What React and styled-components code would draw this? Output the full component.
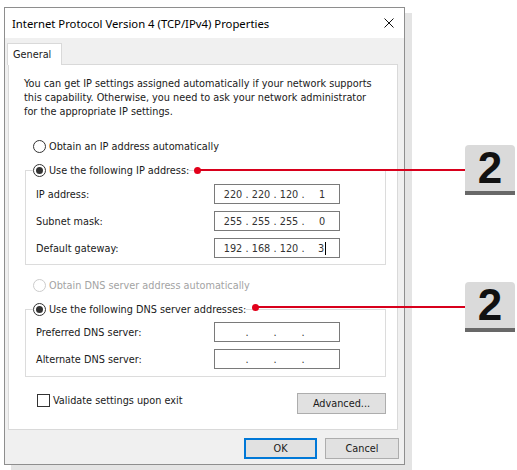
import React from "react";
import styled, { createGlobalStyle } from "styled-components";

const GlobalStyle = createGlobalStyle`
  html, body {
    margin: 0;
    padding: 0;
    background: #ffffff;
  }
`;

const Page = styled.div`
  position: relative;
  width: 517px;
  height: 470px;
  padding: 7px 0 0 4px;
  box-sizing: border-box;
  font-family: "DejaVu Sans Condensed", "Liberation Sans", sans-serif;
  font-size: 10.8px;
  color: #1a1a1a;
`;

const Dialog = styled.div`
  width: 401px;
  box-sizing: border-box;
  border: 1px solid #8e8e8e;
  background: #f0f0f0;
  box-shadow: 7px 6px 0 #e4e4e4;
`;

const TitleBar = styled.div`
  height: 30px;
  background: #ffffff;
  display: flex;
  align-items: center;
  justify-content: space-between;
  padding: 0 10px 0 7px;
  font-family: "Noto Sans", "Open Sans", sans-serif;
  font-size: 11.3px;
  color: #000;
`;

const CloseIcon = () => (
  <svg width="10" height="10" viewBox="0 0 10 10">
    <path d="M0.5 0.5 L9.5 9.5 M9.5 0.5 L0.5 9.5" stroke="#111" strokeWidth="1" />
  </svg>
);

const Body = styled.div`
  padding: 5px 0 0 2px;
`;

const Tab = styled.div`
  display: inline-flex;
  align-items: center;
  height: 22px;
  width: 55px;
  box-sizing: border-box;
  padding-left: 5px;
  background: #ffffff;
  border: 1px solid #d9d9d9;
  border-bottom: none;
  position: relative;
  z-index: 1;
  margin-bottom: -1px;
`;

const Panel = styled.div`
  margin-left: 1px;
  width: 390px;
  height: 366px;
  box-sizing: border-box;
  background: #ffffff;
  border: 1px solid #d9d9d9;
  padding: 12px 11px 0 15px;
`;

const Intro = styled.p`
  margin: 0;
  line-height: 14px;
`;

const OptionRow = styled.div`
  display: flex;
  align-items: center;
  gap: 3px;
  height: 16px;
  margin: ${({ $mt }) => $mt || 0}px 0 0 ${({ $ml }) => ($ml === undefined ? 9 : $ml)}px;
  color: ${({ $disabled }) => ($disabled ? "#a3a3a3" : "inherit")};
`;

const RadioCircle = styled.span`
  width: 13px;
  height: 13px;
  box-sizing: border-box;
  border-radius: 50%;
  border: 1px solid ${({ $disabled }) => ($disabled ? "#cccccc" : "#333333")};
  background: #ffffff;
  display: flex;
  align-items: center;
  justify-content: center;
  &::after {
    content: "";
    width: 7px;
    height: 7px;
    border-radius: 50%;
    background: #333333;
    display: ${({ $checked }) => ($checked ? "block" : "none")};
  }
`;

const Radio = ({ checked, disabled, label, mt, ml }) => (
  <OptionRow $mt={mt} $ml={ml} $disabled={disabled}>
    <RadioCircle $checked={checked} $disabled={disabled} />
    <span>{label}</span>
  </OptionRow>
);

const Group = styled.fieldset`
  margin: ${({ $mt }) => $mt}px 0 0 1px;
  width: 361px;
  box-sizing: border-box;
  border: 1px solid #dcdcdc;
  padding: 0 0 ${({ $pb }) => $pb}px 7px;
  min-width: 0;
`;

const Legend = styled.legend`
  padding: 0;
  & > div {
    margin: 0;
  }
`;

const FieldList = styled.div`
  display: flex;
  flex-direction: column;
  gap: 7px;
  margin-top: ${({ $mt }) => $mt}px;
  padding-left: 3px;
`;

const FieldRow = styled.div`
  display: flex;
  align-items: center;
`;

const FieldLabel = styled.span`
  width: 178px;
`;

const IpBox = styled.div`
  width: 126px;
  height: 20px;
  box-sizing: border-box;
  border: 1px solid #7a7a7a;
  display: flex;
  align-items: center;
  padding-left: 7px;
  color: #333;
`;

const Octet = styled.span`
  width: ${({ $last }) => ($last ? 32 : 22)}px;
  text-align: center;
  display: inline-flex;
  justify-content: center;
  align-items: center;
`;

const Dot = styled.span`
  width: 6px;
  text-align: center;
`;

const Caret = styled.span`
  width: 1px;
  height: 13px;
  background: #000;
  margin-left: 1px;
`;

const IpField = ({ value = ["", "", "", ""], caret }) => (
  <IpBox>
    {value.map((o, i) => (
      <React.Fragment key={i}>
        <Octet $last={i === 3}>
          {o}
          {caret && i === 3 && <Caret />}
        </Octet>
        {i < 3 && <Dot>.</Dot>}
      </React.Fragment>
    ))}
  </IpBox>
);

const BottomRow = styled.div`
  display: flex;
  justify-content: space-between;
  align-items: flex-start;
  margin-top: 16px;
`;

const CheckRow = styled.div`
  display: flex;
  align-items: center;
  gap: 3px;
  margin: 1px 0 0 13px;
`;

const CheckBox = styled.span`
  width: 13px;
  height: 13px;
  box-sizing: border-box;
  border: 1px solid #333;
  background: #fff;
`;

const Button = styled.button`
  width: ${({ $w }) => $w}px;
  height: 21px;
  box-sizing: border-box;
  background: #e1e1e1;
  border: 1px solid ${({ $primary }) => ($primary ? "#0078d7" : "#adadad")};
  box-shadow: ${({ $primary }) => ($primary ? "inset 0 0 0 1px #0078d7" : "none")};
  font-family: inherit;
  font-size: inherit;
  color: #1a1a1a;
  padding: 0;
`;

const Footer = styled.div`
  display: flex;
  justify-content: flex-end;
  gap: 8px;
  padding: 8px 5px 5px 0;
`;

const Callout = styled.div`
  position: absolute;
  left: ${({ $left }) => $left}px;
  top: ${({ $top }) => $top}px;
  right: 2px;
  height: 50px;
  display: flex;
  align-items: center;
`;

const RedDot = styled.span`
  width: 7px;
  height: 7px;
  border-radius: 50%;
  background: #e2001a;
  flex-shrink: 0;
`;

const RedLine = styled.span`
  flex: 1;
  height: 2px;
  background: #d8001c;
  margin-left: -1px;
`;

const Badge = styled.div`
  width: 50px;
  height: 50px;
  box-sizing: border-box;
  background: #dadada;
  border-radius: 4px 4px 0 0;
  border-bottom: 4px solid #686868;
  display: flex;
  align-items: center;
  justify-content: center;
  font-family: "Liberation Sans", Arial, sans-serif;
  font-weight: bold;
  font-size: 44px;
  color: #111;
  padding-bottom: 1px;
`;

export default function App() {
  return (
    <Page>
      <GlobalStyle />
      <Dialog>
        <TitleBar>
          <span>Internet Protocol Version 4 (TCP/IPv4) Properties</span>
          <CloseIcon />
        </TitleBar>
        <Body>
          <Tab>General</Tab>
          <Panel>
            <Intro>
              You can get IP settings assigned automatically if your network supports
              <br />
              this capability. Otherwise, you need to ask your network administrator
              <br />
              for the appropriate IP settings.
            </Intro>
            <Radio label="Obtain an IP address automatically" mt={19} />
            <Group $mt={8} $pb={6}>
              <Legend>
                <Radio checked label="Use the following IP address:" ml={0} />
              </Legend>
              <FieldList $mt={6}>
                <FieldRow>
                  <FieldLabel>IP address:</FieldLabel>
                  <IpField value={["220", "220", "120", "1"]} />
                </FieldRow>
                <FieldRow>
                  <FieldLabel>Subnet mask:</FieldLabel>
                  <IpField value={["255", "255", "255", "0"]} />
                </FieldRow>
                <FieldRow>
                  <FieldLabel>Default gateway:</FieldLabel>
                  <IpField value={["192", "168", "120", "3"]} caret />
                </FieldRow>
              </FieldList>
            </Group>
            <Radio disabled label="Obtain DNS server address automatically" mt={12} />
            <Group $mt={8} $pb={7}>
              <Legend>
                <Radio checked label="Use the following DNS server addresses:" ml={0} />
              </Legend>
              <FieldList $mt={5}>
                <FieldRow>
                  <FieldLabel>Preferred DNS server:</FieldLabel>
                  <IpField />
                </FieldRow>
                <FieldRow>
                  <FieldLabel>Alternate DNS server:</FieldLabel>
                  <IpField />
                </FieldRow>
              </FieldList>
            </Group>
            <BottomRow>
              <CheckRow>
                <CheckBox />
                <span>Validate settings upon exit</span>
              </CheckRow>
              <Button $w={89}>Advanced...</Button>
            </BottomRow>
          </Panel>
        </Body>
        <Footer>
          <Button $w={73} $primary>
            OK
          </Button>
          <Button $w={74}>Cancel</Button>
        </Footer>
      </Dialog>
      <Callout $left={194} $top={145}>
        <RedDot />
        <RedLine />
        <Badge>2</Badge>
      </Callout>
      <Callout $left={252} $top={282}>
        <RedDot />
        <RedLine />
        <Badge>2</Badge>
      </Callout>
    </Page>
  );
}
